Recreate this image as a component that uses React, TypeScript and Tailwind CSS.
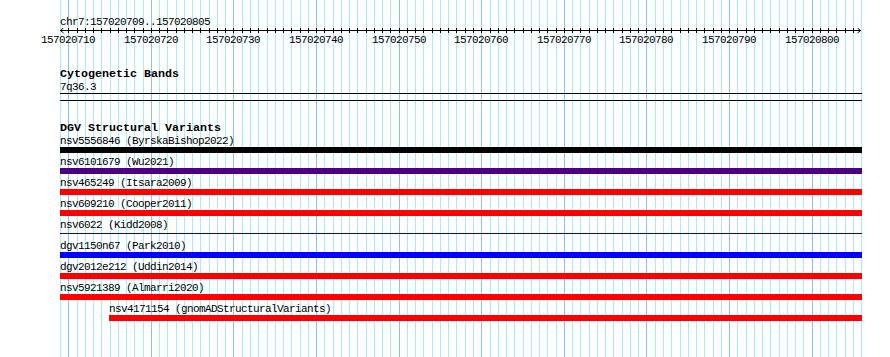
import React from "react";

const START = 157020709;
const BASES = 97;
const LEFT = 60;
const BP = 8.26;

const xAt = (k: number) => Math.round(LEFT + k * BP);

interface Variant {
  id:     string;
  study:  string;
  bar:    string;
  span?:  string;
  thin?:  boolean;
}

const variants: Variant[] = [
  { id: "nsv5556846",  study: "ByrskaBishop2022",         bar: "bg-black" },
  { id: "nsv6101679",  study: "Wu2021",                   bar: "bg-[#4b0082]" },
  { id: "nsv465249",   study: "Itsara2009",               bar: "bg-[#ff0000]" },
  { id: "nsv609210",   study: "Cooper2011",               bar: "bg-[#ff0000]" },
  { id: "nsv6022",     study: "Kidd2008",                 bar: "bg-[#0000cd]", thin: true },
  { id: "dgv1150n67",  study: "Park2010",                 bar: "bg-[#0000ff]" },
  { id: "dgv2012e212", study: "Uddin2014",                bar: "bg-[#ff0000]" },
  { id: "nsv5921389",  study: "Almarri2020",              bar: "bg-[#ff0000]" },
  { id: "nsv4171154",  study: "gnomADStructuralVariants", bar: "bg-[#ff0000]",
    span: "ml-[49px] w-[753px]" },
];

function Grid() {
  const lines = [];
  for (let k = 0; k <= BASES; k++) {
    const major = (START + k) % 10 === 0;
    lines.push(
      <line
        key={k}
        x1={xAt(k) + 0.5}
        x2={xAt(k) + 0.5}
        y1={0}
        y2={357}
        stroke={major ? "#86c6ee" : "#a6eef2"}
        strokeWidth={1}
      />
    );
  }
  return (
    <svg className="absolute inset-0" width={890} height={357}>
      {lines}
    </svg>
  );
}

function Ruler() {
  const ticks = [];
  for (let k = 1; k < BASES; k++) {
    ticks.push(
      <line key={k} x1={xAt(k) + 0.5} x2={xAt(k) + 0.5} y1={0} y2={5} stroke="#000" />
    );
  }
  const end = xAt(BASES);
  return (
    <svg className="block" width={890} height={6}>
      <line x1={LEFT} x2={end} y1={2.5} y2={2.5} stroke="#000" />
      {ticks}
      <polyline points={`${LEFT + 3.5},0 ${LEFT + 0.5},2.5 ${LEFT + 3.5},5`} fill="none" stroke="#000" />
      <polyline points={`${end - 3.5},0 ${end - 0.5},2.5 ${end - 3.5},5`} fill="none" stroke="#000" />
    </svg>
  );
}

export default function App() {
  const labels = [];
  for (let k = 0; k <= BASES; k++) {
    if ((START + k) % 10 === 0) {
      labels.push(
        <span
          key={k}
          className="absolute top-0 w-[60px] text-center"
          style={{ left: xAt(k) - 30 }}
        >
          {START + k}
        </span>
      );
    }
  }

  return (
    <div className="relative w-[890px] h-[357px] bg-white overflow-hidden
      text-black text-[11px] leading-[12px] tracking-[-0.6px]
      font-['Liberation_Mono','DejaVu_Sans_Mono',monospace]">
      <Grid />

      <div className="relative">
        <div className="pl-[60px] pt-[16px] h-[28px]">chr7:157020709..157020805</div>
        <Ruler />
        <div className="relative h-[12px]">{labels}</div>

        <div className="pl-[60px] mt-[23px]">
          <h2 className="h-[11px] font-bold text-[11.67px] leading-[11px] tracking-normal">
            Cytogenetic Bands
          </h2>
          <div className="mt-[2px] h-[11px] leading-[11px]">7q36.3</div>
          <div className="w-[802px] h-[8px] border-y border-black" />
        </div>

        <div className="pl-[60px] mt-[21px]">
          <h2 className="h-[13px] font-bold text-[11.67px] leading-[12px] tracking-normal">
            DGV Structural Variants
          </h2>
          {variants.map((v) => (
            <div key={v.id} className={`h-[21px] ${v.span ?? "w-[802px]"}`}>
              <div className="h-[12px] whitespace-pre">
                {v.id} ({v.study})
              </div>
              {v.thin ? (
                <div className="h-[6px] pt-[2px]">
                  <div className={`h-px ${v.bar}`} />
                </div>
              ) : (
                <div className={`h-[6px] ${v.bar}`} />
              )}
            </div>
          ))}
        </div>
      </div>
    </div>
  );
}
